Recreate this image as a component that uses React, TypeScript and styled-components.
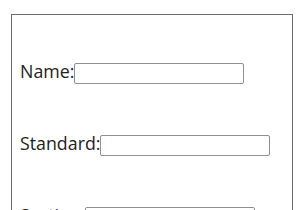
import React from 'react';
import styled, { createGlobalStyle } from 'styled-components';

const GlobalStyle = createGlobalStyle`
  html, body {
    margin: 0;
    padding: 0;
    background: #ffffff;
  }
  body {
    font-family: "Open Sans", "Noto Sans", sans-serif;
    color: #222222;
    overflow: hidden;
  }
`;

const FormBox = styled.form`
  box-sizing: border-box;
  width: 282px;
  height: 220px;
  margin: 14px 0 0 11px;
  padding: 46px 8px 0 8px;
  border: 1px solid #6c6c6c;
  display: flex;
  flex-direction: column;
  gap: 51px;
`;

const Row = styled.div`
  display: flex;
  align-items: baseline;
  height: 21px;
`;

const Label = styled.label`
  font-size: 17.8px;
  line-height: 21px;
  white-space: nowrap;
`;

const Field = styled.input`
  box-sizing: border-box;
  width: 170px;
  height: 21px;
  padding: 1px 2px;
  margin: 0;
  font-family: "Liberation Sans", Arial, sans-serif;
  font-size: 13.33px;
  border: 1px solid #8f8f8f;
  border-radius: 2px;
  background: #ffffff;
  outline: none;
`;

const fields = ['Name:', 'Standard:', 'Section:'];

export default function App() {
  return (
    <>
      <GlobalStyle />
      <FormBox>
        {fields.map((f) => (
          <Row key={f}>
            <Label>{f}</Label>
            <Field type="text" />
          </Row>
        ))}
      </FormBox>
    </>
  );
}
